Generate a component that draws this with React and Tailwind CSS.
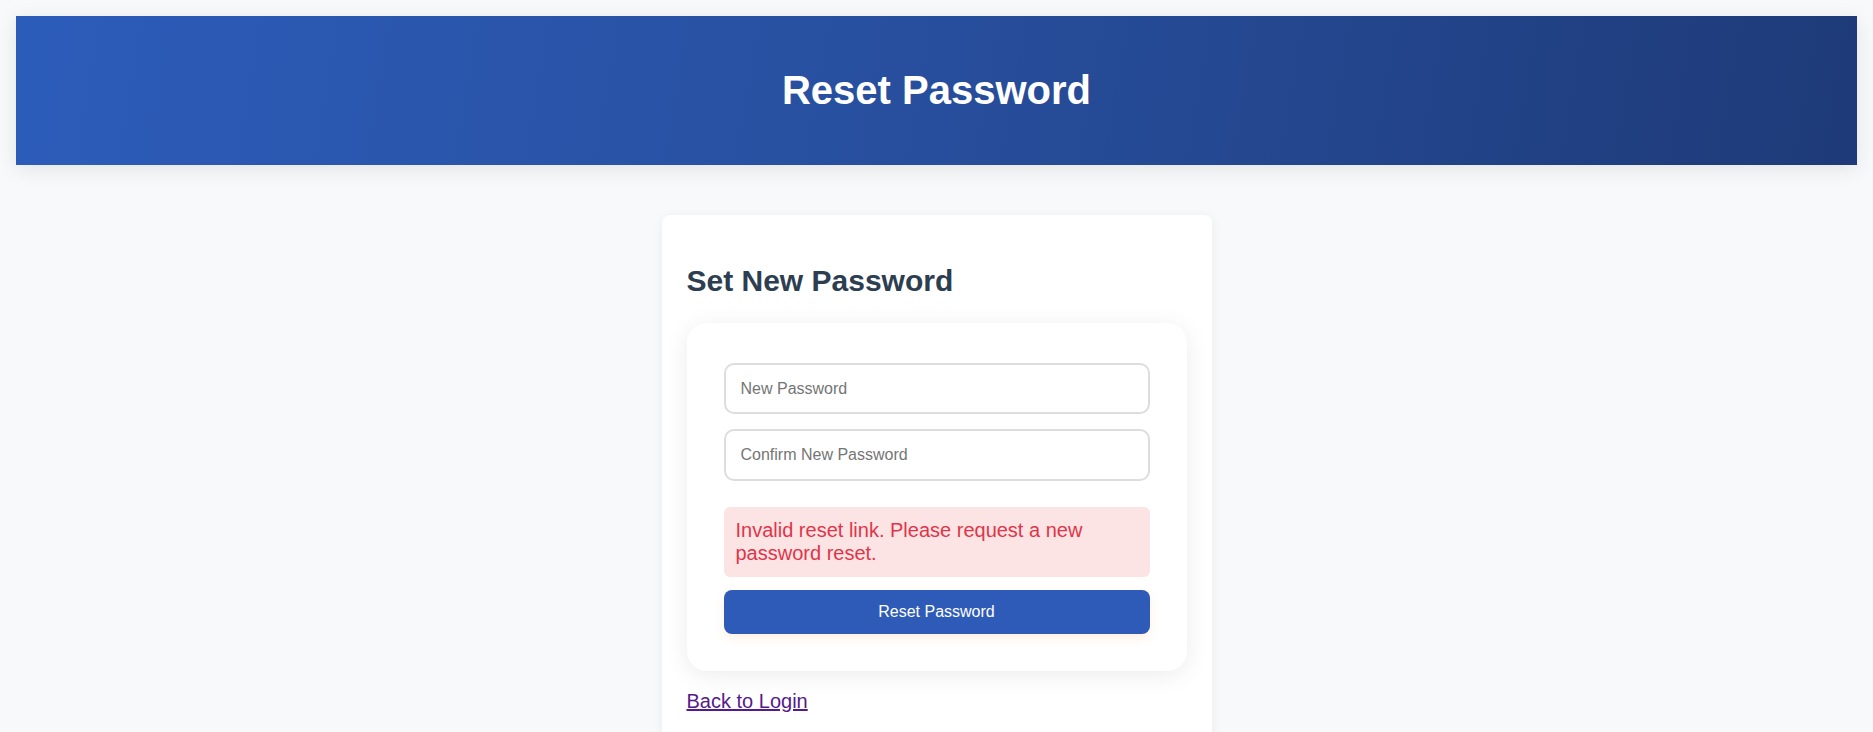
import React from 'react';

const font = { fontFamily: '"Liberation Sans", Arial, sans-serif' };

export default function App() {
  return (
    <div className="min-h-screen w-full bg-[#f8f9fa] pt-[16px] overflow-hidden" style={font}>
      {/* ── Header banner ── */}
      <header className="mx-[16px] h-[149px] flex items-center justify-center bg-[linear-gradient(100deg,#2c5cba_0%,#2850a0_45%,#1e3a78_100%)] shadow-[0_4px_20px_rgba(0,0,0,0.09)]">
        <h1 className="m-0 -mt-[2px] text-[40px] leading-[46px] font-bold text-white">Reset Password</h1>
      </header>

      {/* ── Card ── */}
      <main className="mt-[50px] flex justify-center">
        <div className="w-[550px] bg-white rounded-[8px] shadow-[0_2px_12px_rgba(0,0,0,0.06)] px-[25px] pt-[48px] pb-[40px]">
          <h2 className="m-0 text-[30px] leading-[36px] font-bold text-[#2c3e50]">Set New Password</h2>

          <form
            className="mt-[24px] bg-white rounded-[20px] shadow-[0_4px_24px_rgba(0,0,0,0.08)] px-[37px] pt-[40px] pb-[37px] flex flex-col"
            onSubmit={(e) => e.preventDefault()}
          >
            <input
              type="password"
              placeholder="New Password"
              className="h-[51px] w-full rounded-[10px] border-2 border-[#dddddd] px-[15px] text-[16px] text-[#333] placeholder:text-[#757575] outline-none"
              style={font}
            />
            <input
              type="password"
              placeholder="Confirm New Password"
              className="mt-[15px] h-[52px] w-full rounded-[10px] border-2 border-[#dddddd] px-[15px] text-[16px] text-[#333] placeholder:text-[#757575] outline-none"
              style={font}
            />

            <div className="mt-[26px] rounded-[6px] bg-[#fde4e4] px-[12px] py-[12px] text-[20px] leading-[23px] text-[#e0344a]">
              Invalid reset link. Please request a new password reset.
            </div>

            <button
              type="submit"
              className="mt-[13px] h-[44px] w-full rounded-[8px] bg-[#2e5bb8] text-[16px] text-white shadow-[0_4px_10px_rgba(255,150,60,0.15)] border-none cursor-pointer"
              style={font}
            >
              Reset Password
            </button>
          </form>

          <a href="#" className="mt-[19px] inline-block text-[20px] leading-[23px] text-[#551a8b] underline">
            Back to Login
          </a>
        </div>
      </main>
    </div>
  );
}
